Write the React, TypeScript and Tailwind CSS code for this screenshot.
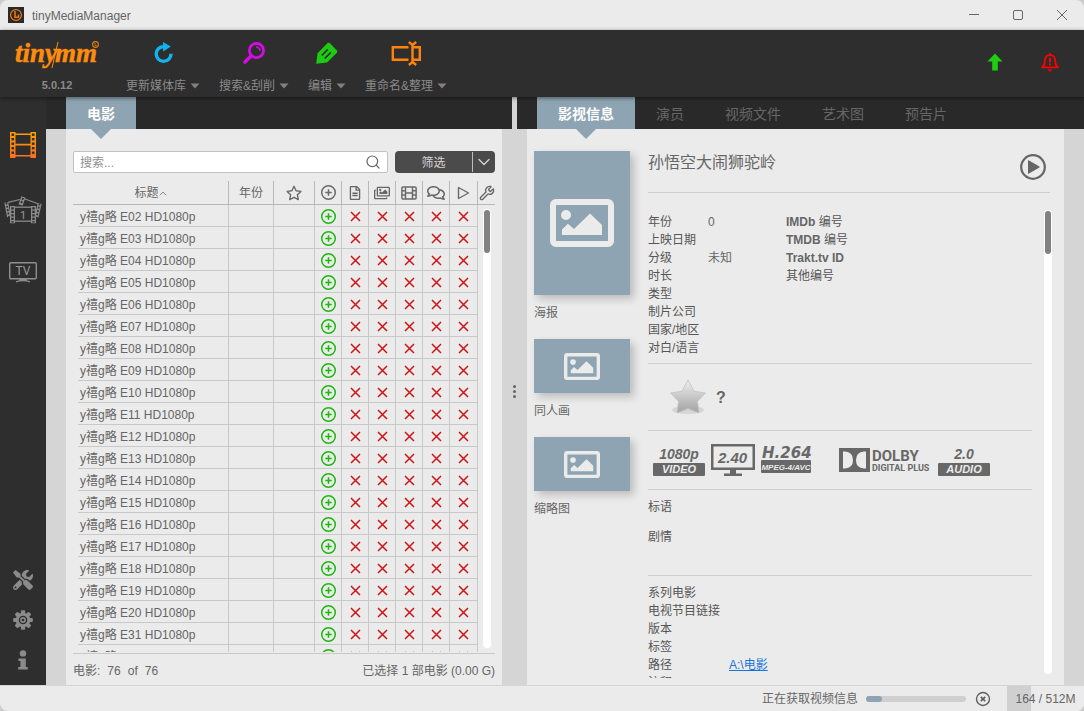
import type { ReactNode } from "react";
import { FaTools, FaRegFileAlt, FaRegImages, FaRegComments } from "react-icons/fa";
import { Wrench, Search, ChevronDown } from "lucide-react";

const episodes = [
  "E02", "E03", "E04", "E05", "E06", "E07", "E08", "E09", "E10", "E11", "E12",
  "E13", "E14", "E15", "E16", "E17", "E18", "E19", "E20", "E31", "E32",
];

function RefreshIcon() {
  return (
    <svg width="22" height="24" viewBox="0 0 22 24">
      <path d="M19 12.8 A7.4 7.4 0 1 1 12 5.6" fill="none" stroke="#12b4f0" strokeWidth="3.4" />
      <path d="M11 1 L18.8 5.6 L11.2 10.4 Z" fill="#12b4f0" />
    </svg>
  );
}

function SearchToolIcon() {
  return (
    <svg width="24" height="24" viewBox="0 0 24 24" fill="none" stroke="#d40be4" strokeLinecap="round">
      <circle cx="14.5" cy="9.5" r="7.1" strokeWidth="2.8" />
      <path d="M9 15 L3 21" strokeWidth="3.6" />
      <path d="M14.5 6 A4 4 0 0 1 18 9.5" strokeWidth="1.3" />
    </svg>
  );
}

function PencilIcon() {
  return (
    <svg width="24" height="24" viewBox="0 0 24 24">
      <path d="M1.2 22.8 L2.6 12.2 L12.6 2 Q13.8 1.2 15 2.2 L21.9 9.4 Q22.8 10.6 21.9 11.8 L12 21.6 Z" fill="#1ccb12" />
      <path d="M6.8 14.4 L12.8 8.4 M9.8 17.4 L15.8 11.4" stroke="#2e2e2e" strokeWidth="1.5" />
      <path d="M3.8 13.4 L4 20.2 L10.6 20.4" fill="none" stroke="#1ccb12" strokeWidth="1.6" />
    </svg>
  );
}

function RenameIcon() {
  return (
    <svg width="32" height="26" viewBox="0 0 32 26" fill="none" stroke="#ff8409" strokeWidth="2.4">
      <path d="M18.5 7.2 H2.8 V19.8 H18.5" />
      <path d="M23 7.2 H29.8 V19.8 H23" />
      <path d="M22.5 4.5 V22.5 M18.8 2 L22.5 5 L26.2 2 M18.8 25 L22.5 22 L26.2 25" />
    </svg>
  );
}

function AppIcon() {
  return (
    <svg width="16" height="16" viewBox="0 0 16 16">
      <rect width="16" height="16" fill="#2a2a2a" />
      <circle cx="8" cy="8" r="5.4" fill="none" stroke="#f07a10" strokeWidth="1.2" />
      <path d="M7 4 V10.3 H10.5 V7.5" fill="none" stroke="#f07a10" strokeWidth="1.5" />
    </svg>
  );
}

function FilmStripIcon() {
  const holes = [3.6, 8.1, 12.6, 17.1, 21.6];
  return (
    <svg width="28" height="28" viewBox="0 0 28 28">
      <defs>
        <linearGradient id="filmFill" x1="0" y1="0" x2="0" y2="1">
          <stop offset="0" stopColor="#ffa000" />
          <stop offset="1" stopColor="#ff7020" />
        </linearGradient>
      </defs>
      <path
        fill="url(#filmFill)"
        fillRule="evenodd"
        d="M1 1H6.5V2.5H21.5V1H27V27H21.5V25.5H6.5V27H1Z M6.5 4V12.8H21.5V4Z M6.5 14.4V24H21.5V14.4Z"
      />
      {holes.map((y) => (
        <g key={y} fill="#2e2e2e">
          <rect x="2.5" y={y - 1.1} width="2.6" height="2.4" />
          <rect x="22.9" y={y - 1.1} width="2.6" height="2.4" />
        </g>
      ))}
    </svg>
  );
}

function MovieSetIcon() {
  return (
    <svg width="38" height="30" viewBox="0 0 38 30" fill="none" stroke="#8b8b8b">
      <path d="M2.3 7.5 L5 22" strokeWidth="4" />
      <path d="M2.3 7.5 L5 22" stroke="#2e2e2e" strokeWidth="1.6" strokeDasharray="1.9 1.5" />
      <path d="M35.7 8.5 L32.5 22" strokeWidth="4" />
      <path d="M35.7 8.5 L32.5 22" stroke="#2e2e2e" strokeWidth="1.6" strokeDasharray="1.9 1.5" />
      <path d="M19.5 2 L16.5 10" strokeWidth="4.4" />
      <path d="M19.1 3 L16.7 9.4" stroke="#2e2e2e" strokeWidth="1.8" strokeDasharray="1.9 1.5" />
      <path d="M4 7.3 L16 4.5 M21 4 L34 8.8" strokeWidth="1.2" />
      <rect x="7" y="12.2" width="24" height="14" fill="#2e2e2e" strokeWidth="1.3" />
      <path d="M8.5 11 V28.2 M29.5 11 V28.2" strokeWidth="5" />
      <path d="M8.5 12.3 V27.4 M29.5 12.3 V27.4" stroke="#2e2e2e" strokeWidth="2.4" strokeDasharray="2.1 1.4" />
      <text x="19" y="23.5" textAnchor="middle" stroke="none" fill="#9a9a9a" className="font-['Roboto'] text-[11px]">1</text>
    </svg>
  );
}

function TvIcon() {
  return (
    <svg width="30" height="22" viewBox="0 0 30 22" fill="none" stroke="#8e8e8e" strokeWidth="1.4">
      <rect x="1.7" y="1.7" width="26.6" height="16" rx="1" />
      <path d="M8 20.8 Q15 18.4 22 20.8 M12 18 H18 V19.5 H12 Z" />
      <text x="15" y="14.2" textAnchor="middle" stroke="none" fill="#9a9a9a" className="font-['Roboto'] text-[12px]">TV</text>
    </svg>
  );
}

function GearIcon() {
  return (
    <svg width="20" height="20" viewBox="0 0 20 20" fill="#8b8b8b">
      {[0, 45, 90, 135].map((angle) => (
        <rect key={angle} x="7.9" y="0.2" width="4.2" height="19.6" rx="1" transform={`rotate(${angle} 10 10)`} />
      ))}
      <circle cx="10" cy="10" r="7.3" />
      <circle cx="10" cy="10" r="3.6" fill="none" stroke="#2e2e2e" strokeWidth="1.4" />
      <circle cx="10" cy="10" r="1.3" fill="#2e2e2e" />
    </svg>
  );
}

function InfoIcon() {
  return (
    <svg className="mx-auto" width="12" height="20" viewBox="0 0 12 20" fill="#8b8b8b">
      <circle cx="6" cy="3.4" r="3.2" />
      <path d="M1.4 8.4 H8.8 V17 H10.8 V19.6 H1.2 V17 H3.4 V11 H1.4 Z" />
    </svg>
  );
}

function BellIcon() {
  return (
    <svg width="18" height="20" viewBox="0 0 18 20" fill="none" stroke="#ff0000" strokeWidth="1.8">
      <path d="M9 1 V3 M1.2 15.3 H16.8 Q14.2 13.5 14.2 9 Q14 3.2 9 3.2 Q4 3.2 3.8 9 Q3.8 13.5 1.2 15.3 Z" strokeLinejoin="round" />
      <path d="M9 5.8 V10.2 M9 11.4 V13.2" strokeWidth="2" />
      <path d="M6.6 17.5 H11.4 Q10.6 19.6 9 19.6 Q7.4 19.6 6.6 17.5 Z" fill="#ff0000" stroke="none" />
    </svg>
  );
}

function PlusCircle({ color }: { color: string }) {
  return (
    <svg className="mx-auto block" width="17" height="17" viewBox="0 0 17 17" fill="none" stroke={color} strokeWidth="1.5">
      <circle cx="8.5" cy="8.5" r="6.8" />
      <path d="M8.5 5.3 V11.7 M5.3 8.5 H11.7" />
    </svg>
  );
}

function CrossMark() {
  return (
    <svg className="mx-auto block" width="11" height="11" viewBox="0 0 11 11" stroke="#cf1414" strokeWidth="1.5">
      <path d="M1 1 L10 10 M10 1 L1 10" />
    </svg>
  );
}

function StarOutline() {
  return (
    <svg className="mx-auto block" width="16" height="16" viewBox="0 0 16 16" fill="none" stroke="#6a6a6a" strokeWidth="1.4" strokeLinejoin="round">
      <path d="M8 1.3 L10.1 5.7 L14.9 6.4 L11.4 9.8 L12.3 14.6 L8 12.3 L3.7 14.6 L4.6 9.8 L1.1 6.4 L5.9 5.7 Z" />
    </svg>
  );
}

function FilmOutline() {
  return (
    <svg className="mx-auto block" width="16" height="14" viewBox="0 0 16 14" fill="none" stroke="#6a6a6a" strokeWidth="1.5">
      <rect x="0.9" y="0.9" width="14.2" height="12.2" rx="1" />
      <path d="M4.5 1 V13 M11.5 1 V13 M4.5 7 H11.5 M1 4.8 H4.5 M1 9 H4.5 M11.5 4.8 H15 M11.5 9 H15" />
    </svg>
  );
}

function PlayOutline() {
  return (
    <svg className="mx-auto block" width="13" height="14" viewBox="0 0 13 14" fill="none" stroke="#6a6a6a" strokeWidth="1.4" strokeLinejoin="round">
      <path d="M1.5 1.5 L11.5 7 L1.5 12.5 Z" />
    </svg>
  );
}

function PictureIcon({ className }: { className: string }) {
  return (
    <svg className={className} viewBox="0 0 64 48">
      <rect x="3" y="3" width="58" height="42" rx="3" fill="none" stroke="#ebebeb" strokeWidth="6" />
      <circle cx="16" cy="16" r="5" fill="#ebebeb" />
      <path d="M12 36 V30.5 L18 24.8 L24 30 L40 14.6 L52 26 V36 Z" fill="#ebebeb" />
    </svg>
  );
}

function Artwork({ label, poster }: { label: string; poster?: boolean }) {
  return (
    <figure className="flex flex-col gap-[10px]">
      <div
        className={
          poster
            ? "flex h-36 items-center justify-center bg-[#8ea4b2] shadow-[4px_4px_8px_rgba(0,0,0,0.2)]"
            : "flex h-[54px] items-center justify-center bg-[#8ea4b2] shadow-[4px_4px_8px_rgba(0,0,0,0.2)]"
        }
      >
        <PictureIcon className={poster ? "w-16" : "w-9"} />
      </div>
      <figcaption className="leading-4">{label}</figcaption>
    </figure>
  );
}

function ToolButton({ icon, label }: { icon: ReactNode; label: string }) {
  return (
    <button className="flex flex-col items-center gap-3 pt-[10px] text-[#8a8a8a]">
      <span className="flex h-[26px] items-center">{icon}</span>
      <span className="flex items-center gap-1 leading-4 whitespace-nowrap">
        {label}
        <svg width="10" height="6" viewBox="0 0 10 6">
          <path d="M0.5 0.5 H9.5 L5 5.5 Z" fill="#808080" />
        </svg>
      </span>
    </button>
  );
}

function Tab({ label, active }: { label: string; active?: boolean }) {
  if (active) {
    return (
      <button role="tab" aria-selected="true" className="relative flex items-center bg-[#8ea4b2] px-[21px] pt-px text-sm font-bold text-white">
        {label}
        <svg className="absolute top-full left-1/2 -translate-x-1/2" width="20" height="10" viewBox="0 0 20 10">
          <path d="M0 0 H20 L10 10 Z" fill="#8ea4b2" />
        </svg>
      </button>
    );
  }
  return (
    <button role="tab" aria-selected="false" className="flex items-center px-5 pt-px text-sm text-[#666666]">
      {label}
    </button>
  );
}

function MovieTable() {
  const head = "h-6 border-r border-b border-[#b8b8b8] p-0 font-normal align-middle";
  const cell = "h-[22px] border-r border-b border-[#c9c9c9] p-0 pt-[2px]";
  return (
    <div className="mt-2 flex min-h-0 flex-1 border-b border-[#c9c9c9] pb-px">
      <div className="min-w-0 flex-1 overflow-hidden">
        <table className="w-full table-fixed border-separate border-spacing-0">
          <colgroup>
            <col />
            <col className="w-[45px]" />
            <col className="w-[41px]" />
            <col className="w-[27px]" />
            <col className="w-[27px]" />
            <col className="w-[27px]" />
            <col className="w-[27px]" />
            <col className="w-[27px]" />
            <col className="w-[28px]" />
          </colgroup>
          <thead>
            <tr>
              <th className={head}>
                <span className="inline-flex items-center pt-px">
                  标题
                  <svg width="8" height="5" viewBox="0 0 8 5" fill="none" stroke="#8a8a8a">
                    <path d="M0.8 4.2 L4 1 L7.2 4.2" />
                  </svg>
                </span>
              </th>
              <th className={head}>
                <span className="inline-flex pt-px">年份</span>
              </th>
              <th className={head} aria-label="评分"><StarOutline /></th>
              <th className={head} aria-label="新增"><PlusCircle color="#6a6a6a" /></th>
              <th className={head} aria-label="NFO"><FaRegFileAlt className="mx-auto block" size={14} /></th>
              <th className={head} aria-label="图片"><FaRegImages className="mx-auto block" size={16} /></th>
              <th className={head} aria-label="预告片"><FilmOutline /></th>
              <th className={head} aria-label="字幕"><FaRegComments className="mx-auto block" size={18} /></th>
              <th className={head} aria-label="已观看"><PlayOutline /></th>
            </tr>
          </thead>
          <tbody>
            {episodes.map((ep) => (
              <tr key={ep}>
                <td className="h-[22px] border-r border-[#c9c9c9] p-0 pl-[5px]">
                  <div className="h-[22px] overflow-hidden border-b border-[#c9c9c9] pt-[2px] pl-[2px] leading-5 whitespace-nowrap">
                    y禧g略 {ep} HD1080p
                  </div>
                </td>
                <td className={cell} />
                <td className={cell} />
                <td className={cell}><PlusCircle color="#1cb80e" /></td>
                <td className={cell}><CrossMark /></td>
                <td className={cell}><CrossMark /></td>
                <td className={cell}><CrossMark /></td>
                <td className={cell}><CrossMark /></td>
                <td className={cell}><CrossMark /></td>
              </tr>
            ))}
          </tbody>
        </table>
      </div>
      <div className="flex w-[17px] flex-col items-center">
        <button aria-label="列设置" className="flex h-6 w-full items-center justify-center border-b border-[#b8b8b8]">
          <Wrench size={16} strokeWidth={2} className="shrink-0" />
        </button>
        <div className="mt-1 mb-1 w-2 flex-1 rounded-full bg-white p-px">
          <div className="h-[43px] rounded-full bg-[#828282]" />
        </div>
      </div>
    </div>
  );
}

function Badge({ top, bottom }: { top: string; bottom: string }) {
  return (
    <div className="flex w-[52px] flex-col text-center font-bold italic">
      <span className="text-sm leading-[18px]">{top}</span>
      <span className="rounded-[1px] bg-[#686868] text-[11px] leading-[13px] text-[#ebebeb]">{bottom}</span>
    </div>
  );
}

function MediaLogos() {
  return (
    <div className="flex h-[59px] items-center gap-[6px] border-b border-[#cfcfcf] pl-[5px] text-[#686868]">
      <Badge top="1080p" bottom="VIDEO" />
      <svg width="44" height="32" viewBox="0 0 44 32" fill="#686868">
        <rect x="1.25" y="1.25" width="41.5" height="23.5" fill="none" stroke="#686868" strokeWidth="2.5" />
        <path d="M19 25 H25 V29.5 H31 V32 H13 V29.5 H19 Z" />
        <text x="21.5" y="19" textAnchor="middle" className="font-['Liberation_Sans'] text-[15px] font-bold italic">2.40</text>
      </svg>
      <svg width="52" height="32" viewBox="0 0 52 32" fill="#686868">
        <text x="1" y="13.5" className="font-['DejaVu_Sans'] text-[15px] font-bold italic">H.264</text>
        <rect x="0" y="16" width="50" height="13" rx="1" />
        <text x="25" y="25.5" textAnchor="middle" fill="#ebebeb" className="font-['Liberation_Sans'] text-[8px] font-bold italic">MPEG-4/AVC</text>
      </svg>
      <svg className="ml-5" width="93" height="26" viewBox="0 0 93 26" fill="#686868">
        <path fillRule="evenodd" d="M0 1 H31 V25 H0 Z M4 4.5 V21.5 H6 Q14 21 14 13 Q14 5 6 4.5 Z M27 4.5 V21.5 H25 Q17 21 17 13 Q17 5 25 4.5 Z" />
        <text x="33" y="14" className="font-['Roboto'] text-[15px] font-bold">DOLBY</text>
        <text x="33" y="24" className="font-['Roboto'] text-[9px] font-bold">DIGITAL PLUS</text>
      </svg>
      <Badge top="2.0" bottom="AUDIO" />
    </div>
  );
}

function RatingStar() {
  return (
    <svg width="36" height="36" viewBox="0 0 36 36">
      <defs>
        <linearGradient id="starFill" x1="0" y1="0" x2="0" y2="1">
          <stop offset="0" stopColor="#eeeeee" />
          <stop offset="1" stopColor="#a2a2a2" />
        </linearGradient>
      </defs>
      <ellipse cx="18" cy="31" rx="16" ry="4" fill="#d6d6d6" />
      <path
        d="M18 1 L24 12.2 L35.5 14 L27.5 22.4 L29 34 L18 29.5 L7 34 L8.5 22.4 L0.5 14 L12 12.2 Z"
        fill="url(#starFill)"
        stroke="#c2c2c2"
        strokeWidth="0.8"
        strokeLinejoin="round"
      />
    </svg>
  );
}

const facts: { name: string; value?: string; source?: string; suffix?: string }[] = [
  { name: "年份", value: "0", source: "IMDb", suffix: "编号" },
  { name: "上映日期", source: "TMDB", suffix: "编号" },
  { name: "分级", value: "未知", source: "Trakt.tv ID" },
  { name: "时长", suffix: "其他编号" },
  { name: "类型" },
  { name: "制片公司" },
  { name: "国家/地区" },
  { name: "对白/语言" },
];

function MovieInfo() {
  return (
    <div className="min-w-0 flex-1 overflow-hidden">
      <dl className="border-b border-[#cfcfcf] pt-5 pb-[6px]">
        {facts.map(({ name, value, source, suffix }) => (
          <div key={name} className="grid h-[18px] grid-cols-[60px_78px_1fr] leading-[18px] whitespace-nowrap">
            <dt className="text-[#565656]">{name}</dt>
            <dd>{value}</dd>
            <dt className="text-[#565656]">
              {source && <b className="text-[#666666]">{source} </b>}
              {suffix}
            </dt>
          </div>
        ))}
      </dl>
      <div className="flex h-[67px] items-center gap-[10px] border-b border-[#cfcfcf] pl-[22px]">
        <RatingStar />
        <span className="pt-px text-base font-bold">?</span>
      </div>
      <MediaLogos />
      <div className="flex h-[86px] flex-col gap-[14px] border-b border-[#cfcfcf] pt-[9px] leading-4 text-[#565656]">
        <p>标语</p>
        <p>剧情</p>
      </div>
      <dl className="pt-2">
        {["系列电影", "电视节目链接", "版本", "标签", "路径", "注释"].map((name) => (
          <div key={name} className="grid h-[18px] grid-cols-[81px_1fr] leading-[18px]">
            <dt className="text-[#565656]">{name}</dt>
            <dd>{name === "路径" && <a href="#path" className="text-[#1673d8] underline">A:\电影</a>}</dd>
          </div>
        ))}
      </dl>
    </div>
  );
}

export default function App() {
  return (
    <div className="h-screen bg-[#cccccc] font-['Liberation_Sans','Noto_Sans_CJK_SC',sans-serif] text-xs text-[#666666]">
      <div className="flex h-full flex-col overflow-hidden rounded-lg bg-[#ebebeb]">
        <header className="flex h-[30px] shrink-0 items-center gap-2 px-2">
          <AppIcon />
          <h1 className="flex-1 pt-px">tinyMediaManager</h1>
          <div className="flex gap-[30px] pr-[7px]">
            <button aria-label="最小化">
              <svg width="14" height="14" viewBox="0 0 14 14" stroke="#666666"><path d="M2 6.5 H12" /></svg>
            </button>
            <button aria-label="最大化">
              <svg width="14" height="14" viewBox="0 0 14 14" fill="none" stroke="#666666"><rect x="2.5" y="2.5" width="9" height="9" rx="1.5" /></svg>
            </button>
            <button aria-label="关闭">
              <svg width="14" height="14" viewBox="0 0 14 14" stroke="#666666"><path d="M2 2 L12 12 M12 2 L2 12" /></svg>
            </button>
          </div>
        </header>

        <div className="relative z-10 flex h-[67px] shrink-0 bg-[#2e2e2e] shadow-[0_1px_4px_rgba(0,0,0,0.5)]">
          <div className="flex w-[114px] flex-col items-center">
            <svg width="90" height="36" viewBox="0 0 90 36" className="mt-2" fill="#ff8c0c">
              <g stroke="#ff8c0c" strokeWidth="0.5">
                <text x="3" y="24" className="font-['Liberation_Serif'] text-[27px] font-bold italic">tiny</text>
                <text x="43" y="24" className="font-['Liberation_Serif'] text-[27px] font-bold italic">mm</text>
              </g>
              <path d="M46 4 L40 30" stroke="#ff8c0c" />
              <circle cx="83.5" cy="6.5" r="2.9" fill="none" stroke="#e08010" strokeWidth="1.1" />
              <path d="M83 5 V7.5 H84.8" fill="none" stroke="#e08010" strokeWidth="0.8" />
            </svg>
            <span className="mt-[3px] text-[11px] leading-4 font-bold text-[#8a8a8a]">5.0.12</span>
          </div>
          <nav className="flex flex-1 items-start gap-[19px] pl-3">
            <ToolButton icon={<RefreshIcon />} label="更新媒体库" />
            <ToolButton icon={<SearchToolIcon />} label="搜索&刮削" />
            <ToolButton icon={<PencilIcon />} label="编辑" />
            <ToolButton icon={<RenameIcon />} label="重命名&整理" />
          </nav>
          <div className="flex items-center gap-[38px] pr-[25px] pb-1">
            <button aria-label="更新">
              <svg width="16" height="18" viewBox="0 0 16 18"><path d="M8 0.5 L15.5 8.5 H10.8 V17.5 H5.2 V8.5 H0.5 Z" fill="#1fce10" /></svg>
            </button>
            <button aria-label="通知"><BellIcon /></button>
          </div>
        </div>

        <main className="grid min-h-0 flex-1 grid-cols-[46px_466fr_5px_567fr] grid-rows-1 bg-[#d5d5d5]">
          <nav className="flex flex-col items-center bg-[#2e2e2e] pt-[34px] pb-[15px] text-[#8b8b8b]">
            <button aria-label="电影"><FilmStripIcon /></button>
            <button aria-label="电影系列" className="mt-9"><MovieSetIcon /></button>
            <button aria-label="电视节目" className="mt-9"><TvIcon /></button>
            <div className="mt-auto flex flex-col gap-5">
              <button aria-label="工具"><FaTools size={20} /></button>
              <button aria-label="设置"><GearIcon /></button>
              <button aria-label="关于"><InfoIcon /></button>
            </div>
          </nav>

          <section className="flex min-h-0 min-w-0 flex-col">
            <div role="tablist" className="flex h-8 shrink-0 bg-[#292929] pl-5">
              <Tab label="电影" active />
            </div>
            <div className="mr-[10px] ml-5 flex min-h-0 flex-1 flex-col bg-[#ebebeb] px-[7px] pt-[22px]">
              <div className="flex h-[22px] gap-[7px]">
                <label className="flex min-w-0 flex-1 items-center rounded-xs border border-[#c2c2c2] bg-white px-[6px]">
                  <input
                    type="search"
                    aria-label="搜索"
                    placeholder="搜索..."
                    className="min-w-0 flex-1 bg-transparent pt-px outline-none placeholder:text-[#909090]"
                  />
                  <Search size={16} strokeWidth={1.8} />
                </label>
                <div className="flex w-[100px] rounded bg-[#4b4b4b] text-[#d4d4d4]">
                  <button className="flex-1 pt-px">筛选</button>
                  <button aria-label="筛选选项" className="my-px flex w-[23px] items-center justify-center border-l border-[#bdbdbd]">
                    <ChevronDown size={20} strokeWidth={1.6} />
                  </button>
                </div>
              </div>
              <MovieTable />
              <footer className="flex justify-between pt-[9px] pb-[6px] leading-4">
                <span className="flex gap-[7px]">
                  <span>电影:</span>
                  <span>76</span>
                  <span>of</span>
                  <span>76</span>
                </span>
                <span>已选择 1 部电影 (0.00 G)</span>
              </footer>
            </div>
          </section>

          <div className="flex flex-col items-center justify-center gap-[2px]">
            <span className="size-[3px] rounded-full bg-[#666666]" />
            <span className="size-[3px] rounded-full bg-[#666666]" />
            <span className="size-[3px] rounded-full bg-[#666666]" />
          </div>

          <section className="flex min-h-0 min-w-0 flex-col">
            <div role="tablist" className="flex h-8 shrink-0 gap-px bg-[#292929] pl-5">
              <Tab label="影视信息" active />
              <Tab label="演员" />
              <Tab label="视频文件" />
              <Tab label="艺术图" />
              <Tab label="预告片" />
            </div>
            <div className="mr-5 ml-[10px] flex min-h-0 flex-1 gap-[18px] bg-[#ebebeb] pb-[7px] pl-[7px]">
              <div className="flex w-24 shrink-0 flex-col gap-[18px] pt-[22px]">
                <Artwork label="海报" poster />
                <Artwork label="同人画" />
                <Artwork label="缩略图" />
              </div>
              <div className="flex min-w-0 flex-1 flex-col">
                <div className="mr-[14px] flex shrink-0 items-start justify-between border-b border-[#cfcfcf] pt-[25px] pr-1 pb-3">
                  <h2 className="text-base leading-[18px]">孙悟空大闹狮驼岭</h2>
                  <button aria-label="播放">
                    <svg width="26" height="26" viewBox="0 0 26 26">
                      <circle cx="13" cy="13" r="11.8" fill="none" stroke="#666666" strokeWidth="2.2" />
                      <path d="M8 6.5 Q8 6 8.6 6.3 L19.4 12.6 Q19.9 13 19.4 13.4 L8.6 19.7 Q8 20 8 19.5 Z" fill="#666666" />
                    </svg>
                  </button>
                </div>
                <div className="flex min-h-0 flex-1 gap-3 pr-3">
                  <MovieInfo />
                  <div className="mt-[17px] mb-1 w-2 shrink-0 rounded-full bg-white p-px">
                    <div className="h-[43px] rounded-full bg-[#828282]" />
                  </div>
                </div>
              </div>
            </div>
          </section>
        </main>

        <footer className="flex h-[26px] shrink-0 items-center justify-end border-t border-[#d5d5d5]">
          <span className="pt-px">正在获取视频信息</span>
          <div role="progressbar" aria-label="任务进度" aria-valuenow={16} className="ml-2 h-[6px] w-[100px] rounded-full bg-[#cfcfcf]">
            <div className="h-full w-4 rounded-full bg-[#8ea4b2]" />
          </div>
          <button aria-label="取消" className="ml-[9px]">
            <svg width="16" height="16" viewBox="0 0 16 16" fill="none" stroke="#606060">
              <circle cx="8" cy="8" r="6.5" strokeWidth="1.4" />
              <path d="M5.8 5.8 L10.2 10.2 M10.2 5.8 L5.8 10.2" strokeWidth="1.7" />
            </svg>
          </button>
          <div className="ml-4 flex h-full w-[77px] items-center justify-center bg-linear-to-r from-[#d0d0d0] from-31% to-[#ebebeb] to-31%">
            164 / 512M
          </div>
        </footer>
      </div>
    </div>
  );
}
